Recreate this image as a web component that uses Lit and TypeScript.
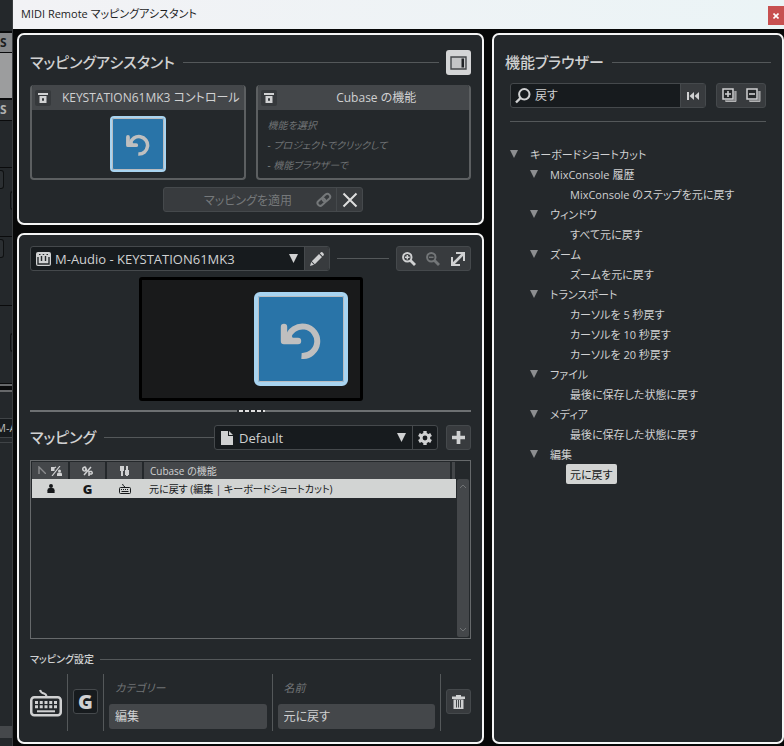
import { LitElement, html, svg, css, nothing } from "lit";
import { customElement, property, state } from "lit/decorators.js";
import { classMap } from "lit/directives/class-map.js";

const base = css`
  * { box-sizing: border-box; }
  button, input, select {
    font: inherit;
    font-feature-settings: inherit;
    color: inherit;
    margin: 0;
    border-radius: 0;
  }
  button {
    padding: 0;
    border: 0;
    background: none;
    display: flex;
    align-items: center;
    justify-content: center;
  }
  svg { display: block; flex: none; }
  h2 { margin: 0; font-size: 15px; font-weight: 500; line-height: 22px; padding-bottom: 2px; }
  .rule { flex: 1; height: 1px; background: #54585a; }
  .btn {
    width: 25px;
    height: 25px;
    flex: none;
    background: #383b3e;
    border: 1px solid #45494c;
    border-radius: 3px;
  }
`;

const icon = (name: string, w: number, h = w) => html`
  <svg width=${w} height=${h} viewBox=${icons[name].box} fill="currentColor" aria-hidden="true">${icons[name].body}</svg>`;

const icons: Record<string, { box: string; body: unknown }> = {
  undo: {
    box: "0 -3 44 40",
    body: svg`<path d="M5 5V19H19" fill="none" stroke="currentColor" stroke-width="6.4" stroke-linecap="round" stroke-linejoin="round"/>
      <path d="M5 19L11 10L15 19Z"/>
      <path d="M9 16A14.8 14.8 0 1 1 22.500 34" fill="none" stroke="currentColor" stroke-width="6"/>`,
  },
  pin: {
    box: "0 0 12 12",
    body: svg`<path d="M1 1h10v2H1z"/><path d="M2.500 4h7v7h-7zM5 6.200v2.600h2V6.200z" fill-rule="evenodd"/>`,
  },
  panel: {
    box: "0 0 17 14",
    body: svg`<path d="M1 1h15v12H1z" fill="#c4c5c6" stroke="#44474a" stroke-width="1.400"/><path d="M11.500 2.500h2.500v9h-2.500z" fill="#202225"/>`,
  },
  chain: {
    box: "0 0 16 16",
    body: svg`<g fill="none" stroke="currentColor" stroke-width="2" transform="rotate(-42 8 8)"><rect x="0.500" y="5" width="8.500" height="5.500" rx="2.750"/><rect x="7" y="5" width="8.500" height="5.500" rx="2.750"/></g>`,
  },
  cross: {
    box: "0 0 16 16",
    body: svg`<path d="M1.500 1.500L14.500 14.500M14.500 1.500L1.500 14.500" fill="none" stroke="currentColor" stroke-width="2"/>`,
  },
  midi: {
    box: "0 0 15 14",
    body: svg`<path d="M2 0H13Q15 0 15 2V12Q15 14 13 14H2Q0 14 0 12V2Q0 0 2 0Z"/><path d="M2 5V12H13V5M5.500 4V9M9.500 4V9" fill="none" stroke="#24282b" stroke-width="1.400"/><path d="M3 2.500h1.500M6.700 2.500h1.500M10.500 2.500h1.500" stroke="#24282b" stroke-width="1.200"/>`,
  },
  pencil: {
    box: "0 0 14 14",
    body: svg`<path d="M0 14L1.200 10L4 12.800ZM1.800 9.200L9 2L12 5L4.800 12.200Z"/><path d="M9.800 1.300L11 0.200Q12 -0.200 13.500 1.500Q14.200 2.500 13.700 3.200L12.700 4.200Z"/>`,
  },
  zoomIn: {
    box: "0 0 14 14",
    body: svg`<circle cx="5.300" cy="5.300" r="4.200" fill="none" stroke="currentColor" stroke-width="2"/><path d="M8.500 8.500L13 13" stroke="currentColor" stroke-width="2.800"/><path d="M3 5.300h4.600M5.300 3v4.600" stroke="currentColor" stroke-width="1.500"/>`,
  },
  zoomOut: {
    box: "0 0 14 14",
    body: svg`<circle cx="5.300" cy="5.300" r="4.200" fill="none" stroke="currentColor" stroke-width="2"/><path d="M8.500 8.500L13 13" stroke="currentColor" stroke-width="2.800"/><path d="M3 5.300h4.600" stroke="currentColor" stroke-width="1.500"/>`,
  },
  expand: {
    box: "0 0 14 14",
    body: svg`<path d="M5 1H13V9M1 5V13H9" fill="none" stroke="currentColor" stroke-width="2"/><path d="M2 12L12 2" stroke="currentColor" stroke-width="2.600"/>`,
  },
  page: {
    box: "0 0 12 14",
    body: svg`<path d="M0 0H7V5H12V14H0Z"/><path d="M8 0L12 4H8Z"/>`,
  },
  gear: {
    box: "0 0 14 14",
    body: svg`<path d="M7 0V14M0.940 3.500L13.060 10.500M0.940 10.500L13.060 3.500" stroke="currentColor" stroke-width="3.400"/><circle cx="7" cy="7" r="5.300"/><circle cx="7" cy="7" r="2.400" fill="#171b1e"/>`,
  },
  plus: {
    box: "0 0 14 14",
    body: svg`<path d="M5 0h4v5h5v4H9v5H5V9H0V5h5z"/>`,
  },
  trash: {
    box: "0 0 13 14",
    body: svg`<path d="M4 0h5v1.500h4V4H0V1.500h4z"/><path d="M1.500 4.500h10V14h-10z"/><path d="M4.500 5v7.500M6.500 5v7.500M8.500 5v7.500" stroke="#383b3e" stroke-width="0.900"/>`,
  },
  keyboard: {
    box: "0 0 32 28",
    body: svg`<path d="M10 1Q11 4 14 4.500Q16 5 16.500 7" fill="none" stroke="currentColor" stroke-width="2.200"/><rect x="1.250" y="8.250" width="29.500" height="18" rx="3" fill="none" stroke="currentColor" stroke-width="2.500"/>
      <path d="M5 13.500H27M5 17.700H27" fill="none" stroke="currentColor" stroke-width="3" stroke-dasharray="3 1.750"/><path d="M7 22.300H25" stroke="currentColor" stroke-width="2"/>`,
  },
  smallKeyboard: {
    box: "0 0 12 10",
    body: svg`<path d="M3.500 0Q4 2 6 3" fill="none" stroke="currentColor"/><rect x="0.500" y="3.500" width="11" height="6" rx="1" fill="none" stroke="currentColor"/><path d="M2 5.500H10" stroke="currentColor" stroke-dasharray="1 1"/><path d="M2.500 7.500H9.500" stroke="currentColor"/>`,
  },
  person: {
    box: "0 0 8 10",
    body: svg`<circle cx="4" cy="2.300" r="2.200"/><path d="M0 10V7Q0 4.500 2.500 4.500H5.500Q8 4.500 8 7V10Z"/>`,
  },
  corner: {
    box: "0 0 8 8",
    body: svg`<path d="M1 8V1L8 8" fill="none" stroke="#8a8c8e" stroke-width="1.400"/>`,
  },
  layers: {
    box: "0 0 11 10",
    body: svg`<path d="M0 1h3.500v4H0zM2 4L8 8" /><path d="M1 10L9 0M1 3L5 1" stroke="currentColor" stroke-width="1.200"/><circle cx="8.500" cy="5" r="1.500"/><path d="M6 10V7.500Q6 6.500 8.500 6.500T11 7.500V10Z"/>`,
  },
  globalPage: {
    box: "0 0 11 10",
    body: svg`<path d="M2 9L9 1M4 2Q3 0.500 1.500 1.500Q0 3 1.500 4.700Q3 5.500 4.300 4V3H2.800M7 10V5.500H9.500Q11 7 9.500 8H7" fill="none" stroke="currentColor" stroke-width="1.500"/>`,
  },
  faders: {
    box: "0 0 9 10",
    body: svg`<path d="M0 0h4v5h-4zM1 5h2v5h-2zM6 0h2v4h-2zM5 4h4v5h-4zM6 9h2v1h-2z"/>`,
  },
  search: {
    box: "0 0 16 16",
    body: svg`<circle cx="9.300" cy="6.300" r="5.200" fill="none" stroke="currentColor" stroke-width="2"/><path d="M5.500 10L1 14.500" stroke="currentColor" stroke-width="2.400"/>`,
  },
  rewind: {
    box: "0 0 12 8",
    body: svg`<path d="M0 0h2v8H0zM7 0V8L2.500 4zM12 0V8L7.500 4z"/>`,
  },
  openAll: {
    box: "0 0 15 15",
    body: svg`<path d="M3 12h9V3h2v11H3z" fill="#88898b"/><path d="M4 13.500h10V3" fill="none" stroke="#b2b3b4"/><path d="M1 1h10v10H1z" fill="#252729" stroke="currentColor" stroke-width="1.500"/><path d="M3 6h6M6 3v6" stroke="currentColor" stroke-width="1.600"/>`,
  },
  closeAll: {
    box: "0 0 15 15",
    body: svg`<path d="M3 12h9V3h2v11H3z" fill="#88898b"/><path d="M4 13.500h10V3" fill="none" stroke="#b2b3b4"/><path d="M1 1h10v10H1z" fill="#252729" stroke="currentColor" stroke-width="1.500"/><path d="M3 6h6" stroke="currentColor" stroke-width="1.600"/>`,
  },
  down: { box: "0 0 8 8", body: svg`<path d="M0 0H8L4 8Z"/>` },
  chevronUp: { box: "0 0 8 5", body: svg`<path d="M1 4L4 1L7 4" fill="none" stroke="currentColor"/>` },
  chevronDown: { box: "0 0 8 5", body: svg`<path d="M1 1L4 4L7 1" fill="none" stroke="currentColor"/>` },
  close: { box: "0 0 6 6", body: svg`<path d="M0.500 0.500L5.500 5.500M5.500 0.500L0.500 5.500" stroke="currentColor" stroke-width="1.600"/>` },
};

/** Strip of the project window that stays visible beside the assistant. */
@customElement("project-edge")
class ProjectEdge extends LitElement {
  static styles = [base, css`
    :host { display: flex; flex-direction: column; overflow: hidden; background: #24282b; color: #bbb; border-right: 1px solid #3a3d3f; }
    div { flex: none; border-bottom: 1px solid #0a0b0c; overflow: hidden; }
    .head { height: 33px; border-bottom-width: 2px; }
    .letter { height: 20px; background: #86888a; color: #1c1e20; font: bold 12px/20px "Open Sans", sans-serif; }
    .light { height: 47px; background: #9c9d9e; border-bottom-width: 2px; }
    .dark { background: #36393c; color: #b0b0b0; height: 21px; }
    .slot { height: 69px; padding-top: 2px; }
    .slot i, .slot b { display: block; height: 19px; border: 1px solid #0e1011; }
    .slot i { width: 4px; border-left: 0; border-radius: 0 3px 3px 0; background: #2b2f32; }
    .slot b { width: 4px; margin-left: 10px; border-right: 0; border-radius: 3px 0 0 3px; margin-top: 2px; }
    .first { height: 47px; }
    .tall { height: 78px; padding-top: 23px; }
    .bars { height: 8px; background: #0a0b0c; border-top: 2px solid #66686a; border-bottom: 2px solid #66686a; }
    .name { height: 20px; margin-top: 26px; background: #171b1e; border: solid #404447; border-width: 1px 0; font: 11px/18px "Open Sans", sans-serif; text-indent: -4px; white-space: nowrap; }
    .grow { flex: 1; margin-top: 4px; border-top: 1px solid #404447; border-bottom: 0; }
    .foot { height: 12px; background: #45484b; border: 0; margin-bottom: 8px; }
  `];
  render() {
    return html`
      <div class="head"></div><div class="letter">S</div><div class="light"></div>
      <div class="letter dark">S</div><div class="first"></div>
      <div class="slot"><i></i><b></b></div><div class="slot"><i></i></div>
      <div class="tall"><div class="slot"><b></b></div></div>
      <div class="bars"></div><div class="name">M-A</div><div class="grow"></div><div class="foot"></div>`;
  }
}

@customElement("mapping-assistant")
class MappingAssistant extends LitElement {
  static styles = [base, css`
    :host { display: flex; flex-direction: column; gap: 10px; padding: 15px 11px 11px; }
    .title { display: flex; align-items: center; gap: 8px; height: 25px; }
    .toggle { background: #d4d5d6; border: 0; margin-left: -1px; }
    .cards { display: grid; grid-template-columns: 1fr 1fr; gap: 10px; }
    .card { height: 95px; border: 2px solid #5c5f61; border-top: 0; border-radius: 4px; display: flex; flex-direction: column; overflow: hidden; }
    .head { display: flex; align-items: center; height: 25px; padding: 0 3px; background: #44474a; flex: none; margin: 0 -2px; }
    .pin { width: 16px; height: 16px; flex: none; background: #36393c; border-radius: 2px; margin-left: 2px; }
    h3 { margin: 0; flex: 1; padding-left: 8px; font-size: 12px; font-weight: 400; text-align: center; line-height: 25px; white-space: nowrap; }
    .control { display: flex; flex: 1; align-items: center; justify-content: center; }
    .tile { width: 56px; height: 56px; border: 2px solid #a9d4f0; border-radius: 4px; background: #2974a8; box-shadow: inset 0 0 0 1px #b9bcc0; color: #bfbfbf; }
    .hint { margin: 0; padding: 5px 10px; font-size: 10px; line-height: 20px; font-style: italic; color: #707375; }
    .apply { display: flex; align-self: center; height: 25px; margin: -3px 0 0 25px; width: 200px; background: #383b3e; border: 1px solid #45494c; border-radius: 3px; }
    .apply > .go { flex: 1; color: #75787a; font-size: 12px; gap: 24px; padding-left: 36px; white-space: nowrap; }
    .apply > .cancel { width: 26px; flex: none; border-left: 1px solid #45494c; color: #dedede; }
  `];
  render() {
    return html`
      <div class="title"><h2>マッピングアシスタント</h2><span class="rule"></span>
        <button class="btn toggle" aria-label="機能ブラウザーを表示">${icon("panel", 17, 14)}</button></div>
      <div class="cards">
        <section class="card">
          <div class="head"><button class="pin" aria-label="コントロールを固定">${icon("pin", 12)}</button><h3>KEYSTATION61MK3 コントロール</h3></div>
          <div class="control"><button class="tile" aria-label="コントロール">${icon("undo", 26, 24)}</button></div>
        </section>
        <section class="card">
          <div class="head"><button class="pin" aria-label="機能を固定">${icon("pin", 12)}</button><h3>Cubase の機能</h3></div>
          <p class="hint">機能を選択<br>- プロジェクトでクリックして<br>- 機能ブラウザーで</p>
        </section>
      </div>
      <div class="apply">
        <button class="go" disabled>マッピングを適用 ${icon("chain", 16)}</button>
        <button class="cancel" aria-label="キャンセル">${icon("cross", 16)}</button>
      </div>`;
  }
}

@customElement("mapping-editor")
class MappingEditor extends LitElement {
  static styles = [base, css`
    :host { display: flex; flex-direction: column; padding: 11px; }
    .row { display: flex; align-items: center; height: 25px; flex: none; }
    h2 { margin-right: 8px; }
    .combo { display: flex; height: 25px; border: 1px solid #45494c; border-radius: 3px; background: #171b1e; overflow: hidden; }
    .pick { display: grid; grid-template-columns: 24px 1fr 22px; flex: 1; align-items: center; }
    .pick > * { grid-row: 1; }
    .pick > svg { justify-self: center; pointer-events: none; }
    .pick > svg:first-child { grid-column: 1; }
    .pick > svg:last-child { grid-column: 3; }
    select { grid-column: 1 / -1; appearance: none; border: 0; background: none; height: 23px; padding: 0 24px; font-size: 13px; min-width: 0; }
    .combo button { width: 25px; border-left: 1px solid #45494c; }
    .combo button.raised { background: #383b3e; }
    .device { width: 300px; }
    .preset { width: 224px; margin-right: 8px; }
    .between { margin: 0 7px; }
    .tools { display: flex; width: 75px; height: 25px; background: #383b3e; border: 1px solid #45494c; border-radius: 3px; }
    .tools button { flex: 1; }
    .tools button:disabled { color: #737678; }
    .surface { width: 224px; height: 124px; margin: 6px auto 0; border: 3px solid #000; border-radius: 3px; background: #191a1b; display: flex; align-items: center; justify-content: flex-end; padding-right: 12px; flex: none; }
    .tile { width: 94px; height: 94px; border: 4px solid #a9d4f0; border-radius: 6px; background: #2974a8; box-shadow: inset 0 0 0 1px #b9bcc0; color: #bfbfbf; }
    .splitter { display: flex; justify-content: center; height: 2px; margin: 9px 0 13px; background: #6d7072; flex: none; }
    .splitter i { width: 28px; background: repeating-linear-gradient(90deg, #24282b 0 2px, #dedede 2px 6px); }
    .list { flex: 1; display: flex; margin-top: 10px; border: 1px solid #66696b; padding: 1px; min-height: 120px; }
    table { width: calc(100% - 12px); height: max-content; border-collapse: collapse; table-layout: fixed; font-size: 10px; }
    th { height: 17px; padding: 0; background: #44474a; font-weight: 400; border-right: 2px solid #24282b; }
    td { height: 19px; padding: 0; background: #d2d4d3; color: #16181a; white-space: nowrap; }
    .mark { width: 37px; }
    th.mark > span, td.mark > span { display: flex; justify-content: center; gap: 5px; }
    .name { text-align: left; padding-left: 6px; }
    .g { font-weight: 800; font-size: 13px; line-height: 14px; }
    .end { width: 5px; }
    .scroll { align-self: flex-end; width: 12px; height: calc(100% - 17px); border-radius: 2px; background: #44474a; color: #6f7274; display: flex; flex-direction: column; justify-content: space-between; align-items: center; padding: 5px 0; }
    .caption { display: flex; align-items: center; gap: 6px; height: 20px; margin-top: 10px; flex: none; }
    h3 { margin: 0; font-size: 10px; font-weight: 500; line-height: 20px; }
    .settings { display: grid; grid-template-columns: 32px 1px 25px 1px 1fr 1px 1fr 1px 25px; column-gap: 5px; align-items: center; height: 57px; margin-top: 5px; flex: none; }
    .bar { height: 57px; background: #54585a; }
    .settings > .btn { margin-bottom: 2px; }
    .global { background: #171b1e; font-size: 20px; font-weight: 800; line-height: 22px; }
    .field { display: flex; flex-direction: column; gap: 6px; padding-top: 2px; min-width: 0; }
    label { font-size: 11px; line-height: 20px; font-style: italic; color: #717476; padding-left: 6px; }
    input { width: 100%; min-width: 0; height: 25px; border: 0; border-radius: 3px; background: #44474a; padding: 0 6px 1px; font-size: 12px; }
  `];
  render() {
    return html`
      <div class="row">
        <div class="combo device">
          <div class="pick">${icon("midi", 15, 14)}<select aria-label="デバイス"><option>M-Audio - KEYSTATION61MK3</option></select>${icon("down", 9, 9)}</div>
          <button class="raised" aria-label="編集">${icon("pencil", 14)}</button>
        </div>
        <span class="rule between"></span>
        <div class="tools">
          <button aria-label="拡大">${icon("zoomIn", 14)}</button>
          <button aria-label="縮小" disabled>${icon("zoomOut", 14)}</button>
          <button aria-label="全体表示">${icon("expand", 14)}</button>
        </div>
      </div>
      <div class="surface"><button class="tile" aria-label="コントロール">${icon("undo", 44, 40)}</button></div>
      <div class="splitter"><i></i></div>
      <div class="row"><h2>マッピング</h2><span class="rule"></span>
        <div class="combo preset">
          <div class="pick">${icon("page", 12, 14)}<select aria-label="ページ"><option>Default</option></select>${icon("down", 9, 9)}</div>
          <button aria-label="ページ設定">${icon("gear", 14)}</button>
        </div>
        <button class="btn" aria-label="ページを追加">${icon("plus", 13)}</button>
      </div>
      <div class="list">
        <table>
          <thead><tr>
            <th class="mark"><span>${icon("corner", 8)}${icon("layers", 11, 10)}</span></th>
            <th class="mark"><span>${icon("globalPage", 11, 10)}</span></th>
            <th class="mark"><span>${icon("faders", 9, 10)}</span></th>
            <th class="name">Cubase の機能</th><th class="end"></th>
          </tr></thead>
          <tbody><tr>
            <td class="mark"><span>${icon("person", 8, 9)}</span></td>
            <td class="mark"><span class="g">G</span></td>
            <td class="mark"><span>${icon("smallKeyboard", 12, 10)}</span></td>
            <td class="name" colspan="2">元に戻す (編集 | キーボードショートカット)</td>
          </tr></tbody>
        </table>
        <div class="scroll">${icon("chevronUp", 8, 5)}${icon("chevronDown", 8, 5)}</div>
      </div>
      <div class="caption"><h3>マッピング設定</h3><span class="rule"></span></div>
      <div class="settings">
        ${icon("keyboard", 32, 28)}<span class="bar"></span>
        <button class="btn global">G</button><span class="bar"></span>
        <div class="field"><label for="category">カテゴリー</label><input id="category" value="編集"></div><span class="bar"></span>
        <div class="field"><label for="name">名前</label><input id="name" value="元に戻す"></div><span class="bar"></span>
        <button class="btn" aria-label="削除">${icon("trash", 13, 14)}</button>
      </div>`;
  }
}

interface Group { name: string; items: string[]; }

const groups: Group[] = [
  { name: "MixConsole 履歴", items: ["MixConsole のステップを元に戻す"] },
  { name: "ウィンドウ", items: ["すべて元に戻す"] },
  { name: "ズーム", items: ["ズームを元に戻す"] },
  { name: "トランスポート", items: ["カーソルを 5 秒戻す", "カーソルを 10 秒戻す", "カーソルを 20 秒戻す"] },
  { name: "ファイル", items: ["最後に保存した状態に戻す"] },
  { name: "メディア", items: ["最後に保存した状態に戻す"] },
  { name: "編集", items: ["元に戻す"] },
];

@customElement("function-browser")
class FunctionBrowser extends LitElement {
  @property({ attribute: false }) groups: Group[] = groups;
  @state() private selected = "編集/元に戻す";
  @state() private closed: string[] = [];

  static styles = [base, css`
    :host { display: block; padding: 15px 11px; }
    .title { display: flex; align-items: center; gap: 8px; height: 25px; }
    .body { padding: 8px 5px 0; }
    .find { display: flex; gap: 10px; padding-bottom: 13px; border-bottom: 1px solid #54585a; }
    .box, .pair { display: flex; height: 25px; border: 1px solid #45494c; border-radius: 3px; }
    .box { flex: 1; min-width: 0; background: #171b1e; align-items: center; padding-left: 4px; gap: 4px; }
    input { flex: 1; min-width: 0; height: 23px; padding: 0 0 1px; border: 0; background: none; font-size: 12px; outline: 0; }
    .box button { width: 25px; height: 23px; flex: none; background: #383b3e; border-left: 1px solid #45494c; }
    .pair { width: 50px; flex: none; background: #383b3e; }
    .pair button { flex: 1; }
    ul { list-style: none; margin: 0; padding: 0; font-size: 11px; }
    .tree { padding-top: 22px; }
    li ul { padding-left: 20px; }
    .node, .leaf { height: 20px; white-space: nowrap; }
    .node { gap: 12px; }
    .node svg { color: #8c8e90; }
    .leaf { padding: 0 4px; margin-left: 16px; border-radius: 2px; }
    .leaf.on { background: #d2d4d3; color: #16181a; }
  `];

  private toggle(name: string) {
    this.closed = this.closed.includes(name) ? this.closed.filter((n) => n !== name) : [...this.closed, name];
  }

  private node(name: string, children: unknown) {
    const open = !this.closed.includes(name);
    return html`<li>
      <button class="node" aria-expanded=${open} @click=${() => this.toggle(name)}>${icon("down", 8)}${name}</button>
      ${open ? html`<ul>${children}</ul>` : nothing}
    </li>`;
  }

  render() {
    return html`
      <div class="title"><h2>機能ブラウザー</h2><span class="rule"></span></div>
      <div class="body">
        <div class="find">
          <div class="box">${icon("search", 16)}<input aria-label="検索" value="戻す"><button aria-label="検索をリセット">${icon("rewind", 12, 8)}</button></div>
          <div class="pair"><button aria-label="すべて開く">${icon("openAll", 15)}</button><button aria-label="すべて閉じる">${icon("closeAll", 15)}</button></div>
        </div>
        <ul class="tree">
          ${this.node("キーボードショートカット", this.groups.map((g) => this.node(g.name, g.items.map((item) => {
            const id = `${g.name}/${item}`;
            return html`<li><button class=${classMap({ leaf: true, on: id === this.selected })} @click=${() => { this.selected = id; }}>${item}</button></li>`;
          }))))}
        </ul>
      </div>`;
  }
}

@customElement("app-root")
class AppRoot extends LitElement {
  static styles = [base, css`
    :host {
      display: grid;
      grid-template-columns: 13px minmax(0, 1fr);
      min-height: 100vh;
      background: #070808;
      color: #d0d1d2;
      font-family: "Open Sans", "Noto Sans CJK JP", sans-serif;
      font-feature-settings: "palt";
    }
    .window { display: flex; flex-direction: column; }
    .titlebar { display: flex; align-items: center; height: 29px; background: linear-gradient(90deg, #f2f2f5, #ebf4f6); color: #1c1d1e; padding-left: 8px; flex: none; }
    h1 { margin: 0; font-size: 11px; font-weight: 400; line-height: 16px; padding-bottom: 2px; flex: 1; }
    .close { width: 16px; height: 19px; background: #c75050; color: #fff; margin-top: 2px; }
    .panes { flex: 1; display: grid; grid-template-columns: minmax(0, 1fr) 292px; gap: 8px; padding: 4px 0 2px 4px; }
    .left { display: flex; flex-direction: column; gap: 8px; }
    .panel { border: 2px solid #f4f5f5; border-radius: 7px; background: #24282b; }
    mapping-editor { flex: 1; }
  `];
  render() {
    return html`
      <project-edge></project-edge>
      <main class="window">
        <header class="titlebar"><h1>MIDI Remote マッピングアシスタント</h1><button class="close" aria-label="閉じる">${icon("close", 6)}</button></header>
        <div class="panes">
          <div class="left"><mapping-assistant class="panel"></mapping-assistant><mapping-editor class="panel"></mapping-editor></div>
          <function-browser class="panel"></function-browser>
        </div>
      </main>`;
  }
}
